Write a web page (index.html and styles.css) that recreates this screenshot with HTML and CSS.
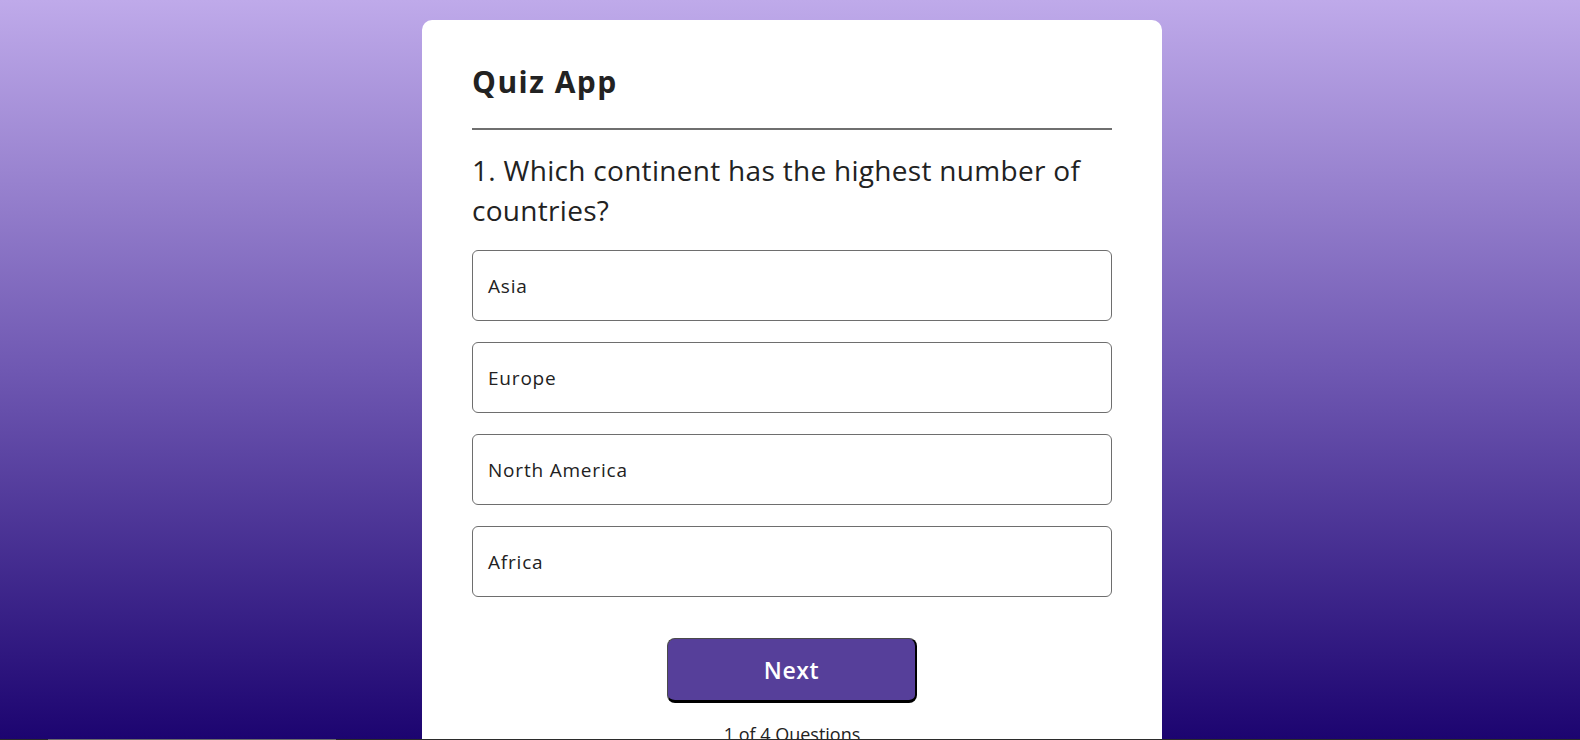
FILE: index.html
```html
<!DOCTYPE html>
<html lang="en">
<head>
<meta charset="utf-8">
<title>Quiz App</title>
<link rel="stylesheet" href="styles.css">
</head>
<body>
<div class="app">
  <h1 class="title">Quiz App</h1>
  <div class="quiz">
    <h2 class="question">1. Which continent has the highest number of countries?</h2>
    <div class="answers">
      <button class="btn">Asia</button>
      <button class="btn">Europe</button>
      <button class="btn">North America</button>
      <button class="btn">Africa</button>
    </div>
    <button class="next">Next</button>
    <p class="count">1 of 4 Questions</p>
  </div>
</div>
<div class="scrollbar"><div class="thumb"></div></div>
</body>
</html>
```
FILE: styles.css
```css
* { box-sizing: border-box; }
html, body { height: 100%; }
body {
  margin: 0;
  font-family: "Open Sans", "DejaVu Sans", sans-serif;
  background: linear-gradient(to bottom, #bfaaea 0%, #6f58b2 50%, #1c0470 100%);
  background-attachment: fixed;
  overflow: hidden;
}
.app {
  width: 740px;
  margin: 20px 0 0 422px;
  background: #fff;
  border-radius: 10px;
  padding: 40px 50px 30px;
}
.title {
  margin: 0;
  font-size: 30px;
  font-weight: 700;
  letter-spacing: 1.5px;
  color: #222;
  line-height: 43px;
  border-bottom: 2px solid #6f6f6f;
  padding-bottom: 25px;
}
.question {
  margin: 20px 0 20px;
  font-size: 28px;
  font-weight: 400;
  letter-spacing: 0.3px;
  line-height: 40px;
  color: #222;
}
.answers { display: flex; flex-direction: column; gap: 21px; }
.btn {
  display: block;
  width: 100%;
  height: 71px;
  background: #fff;
  border: 1px solid #6e6e6e;
  border-radius: 6px;
  padding: 0 15px;
  text-align: left;
  font-family: inherit;
  font-size: 19px;
  letter-spacing: 0.8px;
  color: #222;
}
.next {
  display: block;
  margin: 41px auto 0;
  width: 250px;
  height: 65px;
  background: #563f9a;
  color: #fff;
  font-family: inherit;
  font-size: 23px;
  font-weight: 600;
  letter-spacing: 0.6px;
  border-style: solid;
  border-color: #4a4a4a #000 #000 #4a4a4a;
  border-width: 1px 2px 3px 1px;
  border-radius: 8px;
}
.count {
  margin: 19px 0 0;
  text-align: center;
  font-size: 18px;
  color: #222;
}
.scrollbar {
  position: fixed;
  left: 0; right: 0; bottom: 0;
  height: 1px;
  background: #2b2b2b;
}
.thumb {
  margin-left: 48px;
  width: 288px;
  height: 1px;
  background: #6a6a6a;
}
```
